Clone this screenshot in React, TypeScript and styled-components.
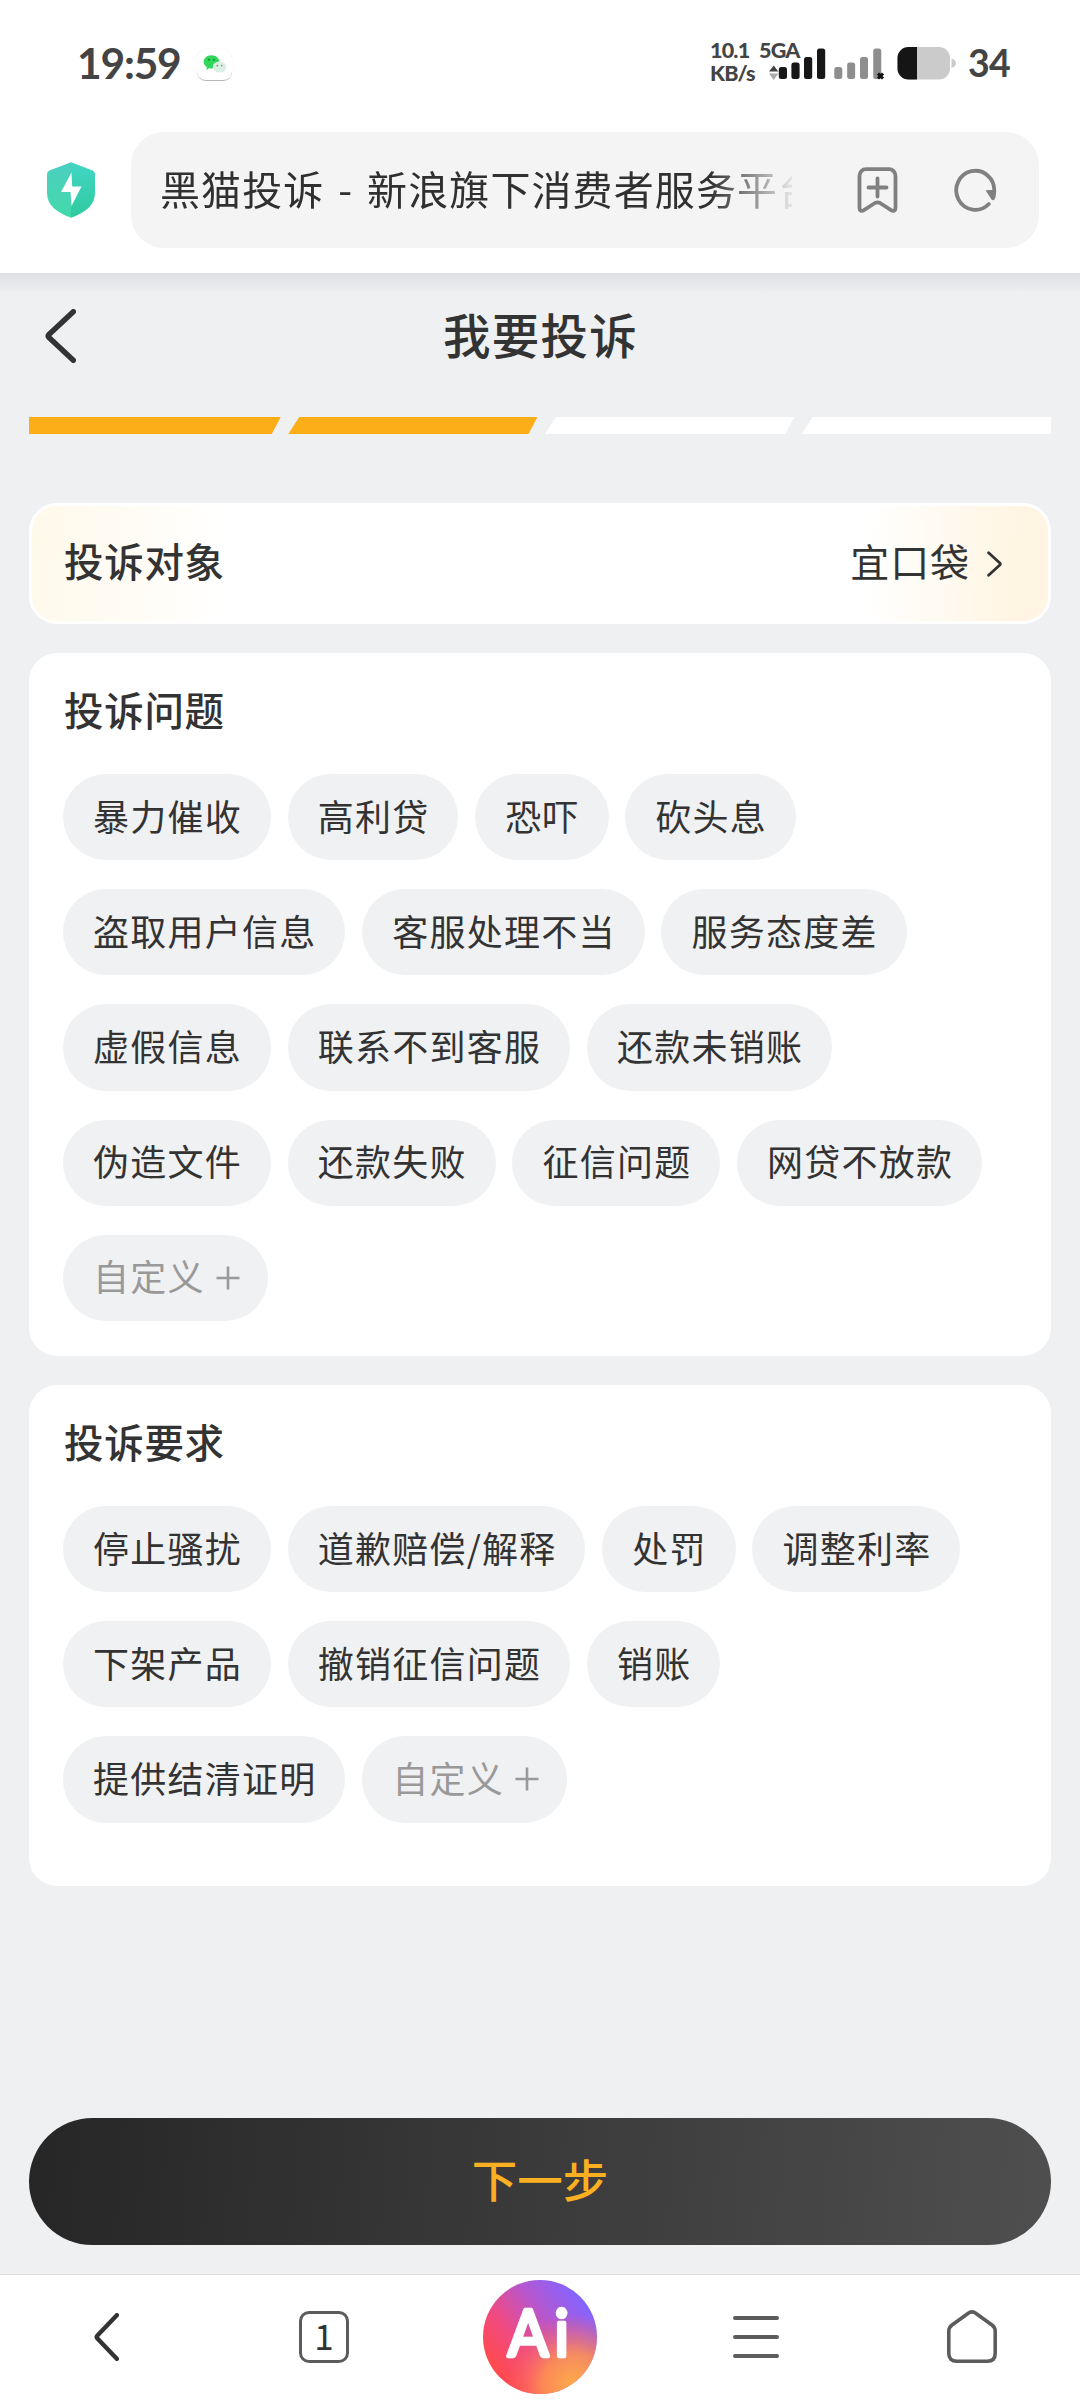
import React from "react";
import styled, { createGlobalStyle } from "styled-components";

const GlobalStyle = createGlobalStyle`
  * { box-sizing: border-box; }
  html, body { margin: 0; padding: 0; background: #eff0f2; }
  body { font-family: "Noto Sans CJK SC", "Noto Sans", sans-serif; color: #333; }
  button { font: inherit; color: inherit; border: 0; background: none; padding: 0; margin: 0; }
  svg { display: block; flex: none; }
`;

const Screen = styled.div`
  width: 1080px;
  height: 2400px;
  display: flex;
  flex-direction: column;
  background: #eff0f2;
  overflow: hidden;
`;

const BrowserTop = styled.header`
  height: 273px;
  flex: none;
  background: #fff;
`;

const StatusBar = styled.div`
  height: 132px;
  padding: 0 70px 5px 77px;
  display: flex;
  align-items: center;
  justify-content: space-between;
  font-family: Lato, "Noto Sans", sans-serif;
  color: #444;
`;

const StatusGroup = styled.div`
  display: flex;
  align-items: center;
`;

const Clock = styled.span`
  font-size: 42.5px;
  font-weight: 700;
  line-height: 50px;
  letter-spacing: -1.2px;
  width: 106px;
  margin-bottom: 2px;
  white-space: nowrap;
`;

const NotificationTile = styled.div`
  width: 35px;
  height: 32px;
  margin-left: 14px;
  margin-top: 2px;
  border-radius: 9px;
  border-bottom: 1.5px solid #b5b5b5;
  box-shadow: 0 0 1px #ddd;
  display: flex;
  align-items: center;
  justify-content: center;
`;

const NetStats = styled.div`
  display: grid;
  grid-template-columns: 49px 10px;
  grid-template-rows: 23px 23px;
  font-size: 21.5px;
  font-weight: 900;
  line-height: 23px;
  letter-spacing: -0.8px;
  white-space: nowrap;
  margin-top: -4px;
`;

const BatteryText = styled.span`
  font-size: 37.5px;
  font-weight: 700;
  line-height: 44px;
  width: 42px;
  margin-left: 11px;
  margin-bottom: 1px;
  letter-spacing: -0.8px;
`;

const AddressRow = styled.div`
  display: flex;
  align-items: center;
  padding: 0 41px 0 47px;
  gap: 36px;
`;

const AddressField = styled.div`
  width: 908px;
  height: 116px;
  border-radius: 33px;
  background: #f4f4f4;
  padding: 0 42px 0 29px;
  display: flex;
  align-items: center;
`;

const PageTitle = styled.span`
  width: 632px;
  overflow: hidden;
  white-space: nowrap;
  font-size: 40px;
  letter-spacing: 1.1px;
  word-spacing: 3.8px;
  line-height: 60px;
  margin-right: 65px;
  margin-bottom: 5px;
  color: #303030;
  mask-image: linear-gradient(90deg, #000 87%, transparent 101%);
`;

const FieldIcons = styled.div`
  display: flex;
  align-items: center;
  gap: 56px;
`;

const Page = styled.main`
  height: 2001px;
  flex: none;
  padding: 0 29px;
  display: flex;
  flex-direction: column;
  background: linear-gradient(#dddfe2, #eff0f2 20px);
`;

const PageHeader = styled.div`
  height: 126px;
  display: grid;
  grid-template-columns: 100px 1fr 100px;
  align-items: center;
`;

const BackButton = styled.button`
  padding-left: 16px;
`;

const Heading = styled.h1`
  margin: 0 0 5px;
  padding-left: 1px;
  font-size: 47.5px;
  font-weight: 500;
  letter-spacing: 1.2px;
  line-height: 60px;
  text-align: center;
`;

const Steps = styled.div`
  height: 17px;
  margin-top: 18px;
  display: flex;
`;

const Step = styled.span<{ $done?: boolean; $first?: boolean; $last?: boolean }>`
  width: ${(p) => (p.$first ? 252 : 249.5)}px;
  margin-left: ${(p) => (p.$first ? 0 : 7.5)}px;
  flex: 1 1 auto;
  background: ${(p) => (p.$done ? "#fbae17" : "#fff")};
  clip-path: polygon(
    ${(p) => (p.$first ? "0" : "11px")} 0,
    100% 0,
    ${(p) => (p.$last ? "100%" : "calc(100% - 9px)")} 100%,
    0 100%
  );
`;

const TargetCard = styled.section`
  height: 121px;
  margin-top: 69px;
  padding: 0 46px 0 32px;
  border: 3px solid #fff;
  border-radius: 28px;
  display: flex;
  align-items: center;
  justify-content: space-between;
  background: linear-gradient(92deg, #fff9ea 0%, #fff 19%, #fff 82%, #fff5e2 97%);
`;

const Label = styled.h2`
  margin: 0;
  font-size: 39.5px;
  font-weight: 500;
  letter-spacing: 0.7px;
  line-height: 54px;
`;

const TargetLabel = styled(Label)`
  margin-bottom: 7px;
`;

const TargetValue = styled.div`
  display: flex;
  align-items: center;
  gap: 17px;
  font-size: 39px;
  letter-spacing: 0.9px;
  line-height: 54px;

  span { margin-bottom: 7px; }
`;

const Card = styled.section<{ $height: number }>`
  height: ${(p) => p.$height}px;
  margin-top: 29px;
  padding: 29px 34px 0;
  border-radius: 28px;
  background: #fff;
`;

const CardLabel = styled(Label)`
  padding-left: 1px;
`;

const ChipList = styled.div`
  margin-top: 38px;
  display: flex;
  flex-direction: column;
  gap: 29px;
`;

const ChipRow = styled.div`
  display: flex;
  gap: 16.8px;
`;

const Chip = styled.button<{ $muted?: boolean }>`
  height: 86.2px;
  padding: 0 ${(p) => (p.$muted ? 28 : 28.9)}px 5px 30px;
  border-radius: 43px;
  background: #f0f1f3;
  color: ${(p) => (p.$muted ? "#999" : "#333")};
  font-size: 36px;
  letter-spacing: 1.25px;
  line-height: 54px;
  white-space: nowrap;
  display: flex;
  align-items: center;
  gap: 11px;

  svg { margin-top: 5px; }
`;

const NextButton = styled.button`
  height: 127px;
  margin-top: 232px;
  padding-bottom: 7px;
  border-radius: 64px;
  background: linear-gradient(95deg, #262626, #4f4f4f);
  color: #fbb021;
  font-size: 45.5px;
  font-weight: 500;
  line-height: 60px;
`;

const NavBar = styled.nav`
  flex: 1;
  border-top: 1px solid #dcdcdc;
  padding-bottom: 2px;
  background: #fff;
  display: grid;
  grid-template-columns: repeat(5, 216px);
  justify-items: center;
  align-items: center;
`;

const NavBack = styled.button`
  padding-right: 4px;
`;

const TabCount = styled.span`
  width: 50px;
  height: 52px;
  border: 3.6px solid #5c5c5c;
  border-radius: 10px;
  display: flex;
  align-items: center;
  justify-content: center;
  font-size: 35px;
  line-height: 40px;
  padding-bottom: 4px;
  color: #333;
`;

function WeChatIcon() {
  return (
    <svg width="24" height="21" viewBox="0 0 24 21">
      <path d="M8.5 1.2c4.4 0 7.9 2.9 7.9 6.6s-3.5 6.7-7.9 6.7l-2.2-.3-3 1.5.5-2.6C1.900 11.900.6 10 .6 7.800.6 4.100 4.100 1.200 8.500 1.200z" fill="#2fd85a" />
      <circle cx="6" cy="5.800" r="1" fill="#128a35" />
      <circle cx="11" cy="5.800" r="1" fill="#128a35" />
      <ellipse cx="16.500" cy="13" rx="6.800" ry="5.600" fill="#dcefe3" />
      <path d="M19 17l2.500 2.500-.3-3.500z" fill="#dcefe3" />
      <circle cx="14.300" cy="11.600" r=".9" fill="#7d9486" />
      <circle cx="18.700" cy="11.600" r=".9" fill="#7d9486" />
    </svg>
  );
}

function SignalIcons() {
  const bars = [
    { x: 0, h: 12 },
    { x: 12.6, h: 16.5 },
    { x: 25.2, h: 22 },
    { x: 38.2, h: 30.5 },
  ];
  return (
    <svg width="128" height="34" viewBox="0 0 128 34">
      <path d="M0 24.500L4.700 18.500 9.400 24.500z" fill="#444" />
      <path d="M0 26.500h9.400L4.700 33z" fill="#aaa" />
      {bars.map((b) => (
        <rect key={b.x} x={9.8 + b.x} y={32 - b.h} width="8.200" height={b.h} rx="2.500" fill="#171717" />
      ))}
      {bars.map((b) => (
        <rect key={b.x} x={65.3 + b.x * 1.02} y={32 - b.h} width="8" height={b.h} rx="2.500" fill="#8e8e8e" />
      ))}
      <path d="M109 26.500l5 5M114 26.500l-5 5" stroke="#111" strokeWidth="3" />
    </svg>
  );
}

function BatteryIcon() {
  return (
    <svg width="60" height="33" viewBox="0 0 60 33">
      <rect x="0.500" y="0" width="52.500" height="32.500" rx="11" fill="#cbcbcb" />
      <path d="M11.500 0H20v32.500h-8.500a11 11 0 0 1-11-11V11a11 11 0 0 1 11-11z" fill="#151515" />
      <path d="M54.500 11.500c6 1.500 6 8 0 9.500z" fill="#cbcbcb" />
    </svg>
  );
}

function ShieldIcon() {
  return (
    <svg width="48" height="56" viewBox="0 0 48 56">
      <defs>
        <linearGradient id="shieldLeft" x1="0" y1="0" x2="0" y2="1">
          <stop offset="0" stopColor="#4bcfc1" />
          <stop offset="1" stopColor="#43d9a9" />
        </linearGradient>
        <linearGradient id="shieldRight" x1="0" y1="0" x2="0" y2="1">
          <stop offset="0" stopColor="#42d6c4" />
          <stop offset="1" stopColor="#2fcaa0" />
        </linearGradient>
      </defs>
      <path d="M24 .3L3 8.300Q0 9.500 0 12v19c0 12 9.500 19.500 24 24.700z" fill="url(#shieldLeft)" />
      <path d="M24 .3l21 8Q48 9.500 48 12v19c0 12-9.500 19.500-24 24.700z" fill="url(#shieldRight)" />
      <path d="M24.500 10.500L14 30h9.500l1 14L34.500 24.500h-9.300z" fill="#fff" />
    </svg>
  );
}

function BookmarkAddIcon() {
  return (
    <svg width="41" height="46" viewBox="0 0 41 46" fill="none" stroke="#808080" strokeWidth="3.800" strokeLinecap="round" strokeLinejoin="round">
      <path d="M9 2.200h23a6.500 6.500 0 0 1 6.500 6.500V41c0 2.500-2 3.500-4 2.300l-11.500-7.300q-2.500-1.300-5 0L6.500 43.300C4.500 44.500 2.500 43.500 2.500 41V8.700A6.500 6.500 0 0 1 9 2.200z" />
      <path d="M20.500 11.500v18M11.500 20.500h18" />
    </svg>
  );
}

function RefreshIcon() {
  return (
    <svg width="43" height="44" viewBox="0 0 43 44" fill="none">
      <path d="M34.800 36A19 19.500 0 1 1 40.200 24" stroke="#808080" strokeWidth="3.800" strokeLinecap="round" />
      <path d="M31.500 22.200l10.500-.5c.3 4-.2 7-1.500 9.800-1 1-2.200.8-2.800.2z" fill="#808080" />
    </svg>
  );
}

function ChevronLeft({ w, h, stroke }: { w: number; h: number; stroke: number }) {
  const p = stroke / 2;
  return (
    <svg width={w} height={h} viewBox={`0 0 ${w} ${h}`} fill="none" stroke="#333" strokeWidth={stroke} strokeLinecap="round" strokeLinejoin="round">
      <path d={`M${w - p} ${p}L${p + 1} ${h / 2 - 1.2}q-1 1.200 0 2.400L${w - p} ${h - p}`} />
    </svg>
  );
}

function ChevronRight() {
  return (
    <svg width="15" height="26" viewBox="0 0 15 26" fill="none" stroke="#333" strokeWidth="2.800" strokeLinecap="round" strokeLinejoin="round">
      <path d="M1.600 1.800L12.800 12q1 1 0 2L1.600 24.200" />
    </svg>
  );
}

function PlusIcon() {
  return (
    <svg width="24" height="24" viewBox="0 0 24 24" stroke="#999" strokeWidth="2.600">
      <path d="M12 .5v23M.5 12h23" />
    </svg>
  );
}

function AiBadge() {
  return (
    <svg width="114" height="114" viewBox="0 0 114 114">
      <defs>
        <linearGradient id="aiBase" x1="0.100" y1="0.750" x2="0.850" y2="0.150">
          <stop offset="0" stopColor="#ff4a50" />
          <stop offset="0.300" stopColor="#f04a82" />
          <stop offset="0.650" stopColor="#b557cf" />
          <stop offset="1" stopColor="#8464ff" />
        </linearGradient>
        <radialGradient id="aiGlow" cx="0.800" cy="0.920" r="0.620">
          <stop offset="0" stopColor="#ffad48" />
          <stop offset="0.450" stopColor="#ff9350" stopOpacity="0.850" />
          <stop offset="1" stopColor="#ff5a5f" stopOpacity="0" />
        </radialGradient>
      </defs>
      <circle cx="57" cy="57" r="57" fill="url(#aiBase)" />
      <circle cx="57" cy="57" r="57" fill="url(#aiGlow)" />
      <text y="76" transform="scale(0.930 1)" fontFamily="Lato, sans-serif" fontWeight="400" fontSize="64" fill="#fff" stroke="#fff" strokeWidth="4.400" strokeLinejoin="round">
        <tspan x="27">A</tspan>
        <tspan x="77">i</tspan>
      </text>
    </svg>
  );
}

function MenuIcon() {
  return (
    <svg width="46" height="44" viewBox="0 0 46 44" stroke="#5c5c5c" strokeWidth="4" strokeLinecap="round">
      <path d="M2 3h42M2 22h42M2 41h42" />
    </svg>
  );
}

function HomeIcon() {
  return (
    <svg width="50" height="53" viewBox="0 0 50 53" fill="none" stroke="#5c5c5c" strokeWidth="3.600" strokeLinejoin="round">
      <path d="M22 2.800q3-1.800 6 0L45 15q3.200 2.500 3.200 6v22.200q0 8-8 8H9.800q-8 0-8-8V21q0-3.500 3.200-6z" />
    </svg>
  );
}

const issueRows = [
  ["暴力催收", "高利贷", "恐吓", "砍头息"],
  ["盗取用户信息", "客服处理不当", "服务态度差"],
  ["虚假信息", "联系不到客服", "还款未销账"],
  ["伪造文件", "还款失败", "征信问题", "网贷不放款"],
  ["自定义"],
];

const demandRows = [
  ["停止骚扰", "道歉赔偿/解释", "处罚", "调整利率"],
  ["下架产品", "撤销征信问题", "销账"],
  ["提供结清证明", "自定义"],
];

function ChipGroup({ title, rows, height }: { title: string; rows: string[][]; height: number }) {
  return (
    <Card $height={height}>
      <CardLabel>{title}</CardLabel>
      <ChipList>
        {rows.map((row) => (
          <ChipRow key={row[0]}>
            {row.map((name) => {
              const custom = name === "自定义";
              return (
                <Chip key={name} $muted={custom}>
                  {name}
                  {custom && <PlusIcon />}
                </Chip>
              );
            })}
          </ChipRow>
        ))}
      </ChipList>
    </Card>
  );
}

export default function App() {
  return (
    <>
      <GlobalStyle />
      <Screen>
        <BrowserTop>
          <StatusBar>
            <StatusGroup>
              <Clock>19:59</Clock>
              <NotificationTile>
                <WeChatIcon />
              </NotificationTile>
            </StatusGroup>
            <StatusGroup>
              <NetStats>
                <span>10.1</span>
                <span>5GA</span>
                <span>KB/s</span>
              </NetStats>
              <SignalIcons />
              <BatteryIcon />
              <BatteryText>34</BatteryText>
            </StatusGroup>
          </StatusBar>
          <AddressRow>
            <ShieldIcon />
            <AddressField>
              <PageTitle>黑猫投诉 - 新浪旗下消费者服务平台</PageTitle>
              <FieldIcons>
                <BookmarkAddIcon />
                <RefreshIcon />
              </FieldIcons>
            </AddressField>
          </AddressRow>
        </BrowserTop>
        <Page>
          <PageHeader>
            <BackButton>
              <ChevronLeft w={31} h={54} stroke={5.4} />
            </BackButton>
            <Heading>我要投诉</Heading>
          </PageHeader>
          <Steps>
            <Step $done $first />
            <Step $done />
            <Step />
            <Step $last />
          </Steps>
          <TargetCard>
            <TargetLabel>投诉对象</TargetLabel>
            <TargetValue>
              <span>宜口袋</span>
              <ChevronRight />
            </TargetValue>
          </TargetCard>
          <ChipGroup title="投诉问题" rows={issueRows} height={703} />
          <ChipGroup title="投诉要求" rows={demandRows} height={501} />
          <NextButton>下一步</NextButton>
        </Page>
        <NavBar>
          <NavBack>
            <ChevronLeft w={25} h={48} stroke={4.4} />
          </NavBack>
          <TabCount>1</TabCount>
          <AiBadge />
          <MenuIcon />
          <HomeIcon />
        </NavBar>
      </Screen>
    </>
  );
}
